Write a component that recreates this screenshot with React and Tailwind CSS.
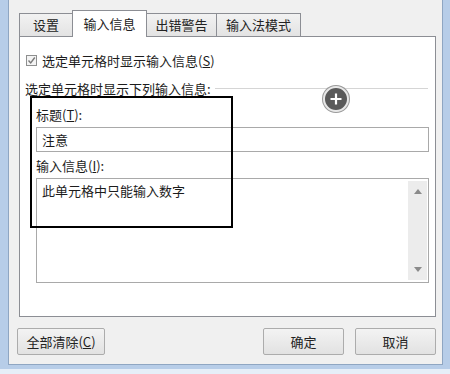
import React from 'react';

const font = { fontFamily: '"Noto Sans CJK SC", "Noto Sans", sans-serif' };

const Tab = ({ label, active, className = '' }) => (
  <div
    className={
      active
        ? `h-[27px] -mb-px bg-white border border-b-0 border-[#8c8e94] flex items-center justify-center text-[13px] text-[#222] relative z-10 ${className}`
        : `h-[23px] bg-gradient-to-b from-[#f2f2f2] to-[#e3e3e3] border border-b-0 border-[#8c8e94] flex items-center justify-center text-[13px] text-[#222] ${className}`
    }
  >
    {label}
  </div>
);

const Button = ({ children, className = '' }) => (
  <button
    className={`h-[27px] border border-[#acacac] rounded-[2px] bg-gradient-to-b from-[#f3f3f3] to-[#e2e2e2] text-[13px] text-[#222] flex items-center justify-center ${className}`}
  >
    {children}
  </button>
);

const App = () => {
  return (
    <div className="w-[450px] h-[374px] bg-[#e6eef8] overflow-hidden" style={font}>
      <div className="h-[369px] border-l-[8px] border-r-[7px] border-b-[4px] border-[#b7cde8]">
        <div className="h-full bg-[#f0f0f0] border-l border-r border-b border-[#8fa6c2] flex flex-col relative">
          {/* tabs */}
          <div className="flex items-end ml-[10px] mt-[10px]">
            <Tab label="设置" className="w-[54px]" />
            <Tab label="输入信息" active className="w-[75px] -ml-px" />
            <Tab label="出错警告" className="w-[71px] -ml-px" />
            <Tab label="输入法模式" className="w-[85px] -ml-px" />
          </div>

          {/* panel */}
          <div className="ml-[10px] mr-[6px] h-[281px] bg-white border border-[#8c8e94] flex flex-col pl-[6px] pr-[6px] text-[13px] text-[#1c1c1c]">
            <div className="flex items-center mt-[17px] h-[12px]">
              <span className="w-[11px] h-[11px] border border-[#8e8f8f] bg-[#f4f4f4] flex items-center justify-center">
                <svg width="9" height="9" viewBox="0 0 9 9">
                  <path d="M1.5 4.5 L3.7 7 L7.8 1.5" fill="none" stroke="#7a7a7a" strokeWidth="1.4" />
                </svg>
              </span>
              <span className="ml-[5px] leading-none">
                选定单元格时显示输入信息(<span className="underline">S</span>)
              </span>
            </div>

            <div className="flex items-center mt-[15px] h-[14px] -ml-px">
              <span className="leading-none whitespace-nowrap">选定单元格时显示下列输入信息:</span>
              <span className="flex-1 h-px bg-[#d5d5d5] ml-[4px] mr-[1px]"></span>
            </div>

            <div className="ml-[10px] mr-0 flex flex-col">
              <div className="mt-[13px] leading-none h-[14px]">
                标题(<span className="underline">T</span>):
              </div>
              <div className="mt-[5px] h-[25px] border border-[#a9a9a9] flex items-center pl-[5px] leading-none">
                注意
              </div>
              <div className="mt-[7px] leading-none h-[14px]">
                输入信息(<span className="underline">I</span>):
              </div>
              <div className="mt-[5px] h-[105px] border border-[#a9a9a9] flex">
                <div className="flex-1 pl-[5px] pt-[5px] leading-none">此单元格中只能输入数字</div>
                <div className="w-[19px] my-[2px] mr-[1px] bg-[#ececec] flex flex-col items-center justify-between py-[8px]">
                  <svg width="8" height="5" viewBox="0 0 8 5">
                    <path d="M0 5 L4 0 L8 5 Z" fill="#8a8a8a" />
                  </svg>
                  <svg width="8" height="5" viewBox="0 0 8 5">
                    <path d="M0 0 L4 5 L8 0 Z" fill="#8a8a8a" />
                  </svg>
                </div>
              </div>
            </div>
          </div>

          {/* buttons */}
          <div className="flex items-center mt-[11px] ml-[8px] mr-[6px]">
            <Button className="w-[88px]">
              全部清除(<span className="underline">C</span>)
            </Button>
            <div className="flex-1"></div>
            <Button className="w-[81px]">确定</Button>
            <Button className="w-[81px] ml-[11px]">取消</Button>
          </div>

          {/* black highlight box */}
          <div className="absolute left-[21px] top-[96px] w-[203px] h-[132px] border-2 border-black pointer-events-none"></div>

          {/* plus circle */}
          <div className="absolute left-[314px] top-[86px] w-[26px] h-[26px] rounded-full bg-[#5a5a5a] border-2 border-[#e8e8e8] shadow-[0_0_0_1px_#9a9a9a] flex items-center justify-center">
            <svg width="14" height="14" viewBox="0 0 14 14">
              <path d="M7 1.5 V12.5 M1.5 7 H12.5" stroke="white" strokeWidth="2.2" />
            </svg>
          </div>
        </div>
      </div>
    </div>
  );
};

export default App;
